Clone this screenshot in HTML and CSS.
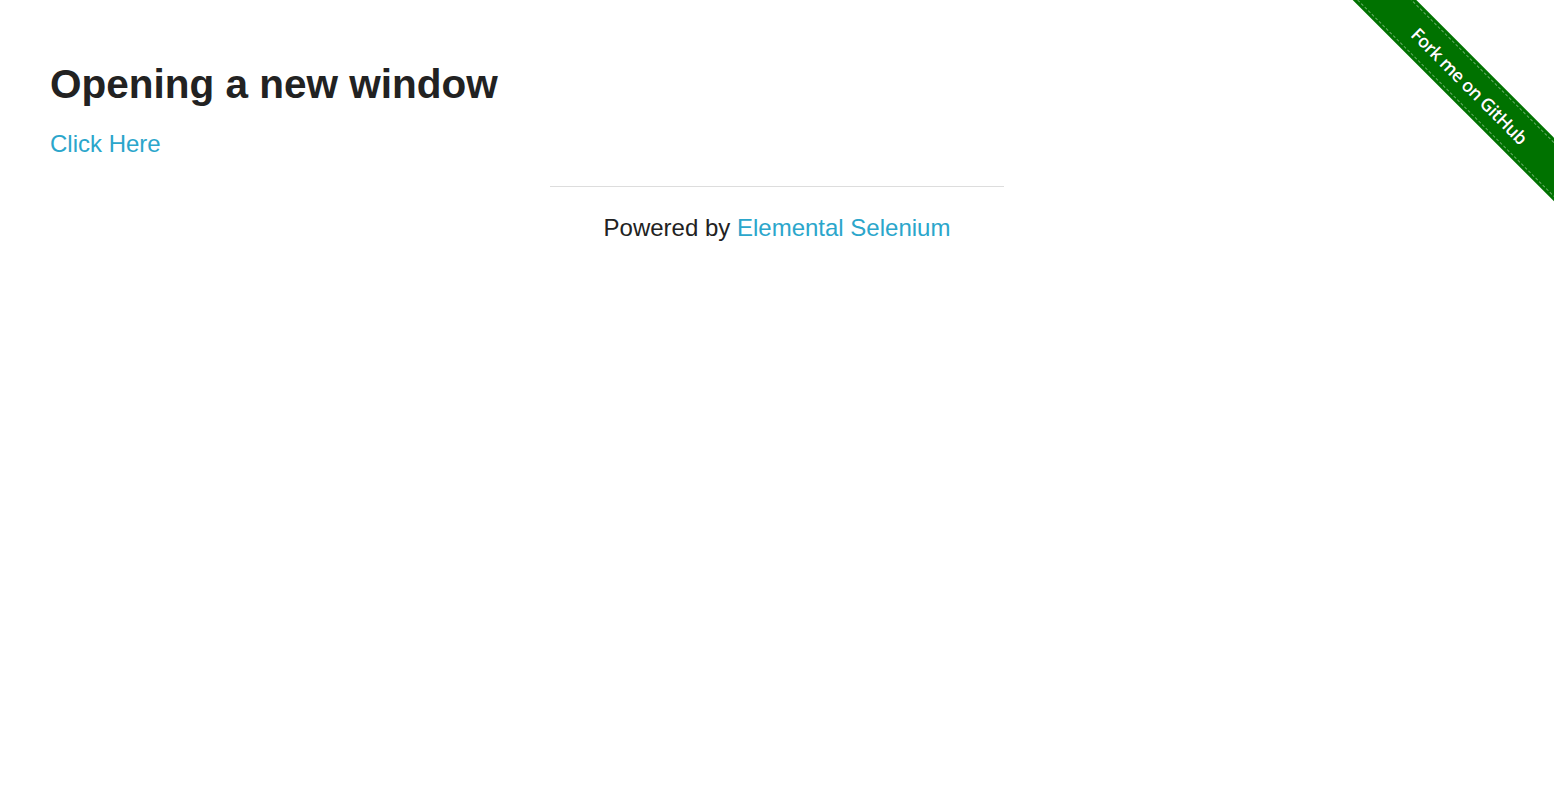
FILE: index.html
```html
<!DOCTYPE html>
<html>
<head>
<meta charset="utf-8">
<title>The Internet</title>
<link rel="stylesheet" href="styles.css">
</head>
<body>
<div class="ribbon-wrap">
  <a class="ribbon" href="#"><span class="ribbon-inner">Fork me on GitHub</span></a>
</div>
<div class="page">
  <div class="content">
    <div class="example">
      <h3 class="title">Opening a new window</h3>
      <a class="link" href="#">Click Here</a>
    </div>
  </div>
  <div class="footer">
    <hr class="rule">
    <div class="powered">Powered by <a class="link" href="#">Elemental Selenium</a></div>
  </div>
</div>
</body>
</html>
```
FILE: styles.css
```css
html, body {
  margin: 0;
  padding: 0;
  background: #fff;
}
body {
  font-family: "Liberation Sans", Arial, Helvetica, sans-serif;
  color: #222;
  font-size: 24px;
}
.page {
  padding: 0 50px;
}
.content {
  padding-top: 59px;
}
.title {
  margin: 0 0 21px 0;
  font-size: 40.5px;
  line-height: 50px;
  font-weight: bold;
  color: #222;
}
.link {
  color: #2ba6cb;
  text-decoration: none;
  font-size: 24px;
  line-height: 28px;
}
.example .link {
  display: inline-block;
}
.footer {
  display: flex;
  flex-direction: column;
  align-items: center;
}
.rule {
  width: 454px;
  margin: 28px 0 0 0;
  border: 0;
  border-top: 1px solid #ddd;
  height: 0;
}
.powered {
  margin-top: 27px;
  line-height: 28px;
  text-align: center;
}
.ribbon-wrap {
  position: absolute;
  top: 0;
  right: 0;
  width: 220px;
  height: 220px;
  overflow: hidden;
}
.ribbon {
  position: absolute;
  left: -14px;
  top: 63px;
  width: 300px;
  height: 45px;
  background: #007200;
  transform: rotate(45deg);
  transform-origin: 50% 50%;
  display: flex;
  align-items: center;
  justify-content: center;
  text-decoration: none;
  box-sizing: border-box;
  padding: 3px 0;
}
.ribbon-inner {
  display: flex;
  align-items: center;
  justify-content: center;
  width: 100%;
  height: 100%;
  box-sizing: border-box;
  border-top: 1px dashed rgba(255,255,255,0.4);
  border-bottom: 1px dashed rgba(255,255,255,0.4);
  color: #fff;
  font-family: "Open Sans", "DejaVu Sans", sans-serif;
  font-weight: 600;
  font-size: 18px;
  letter-spacing: -0.5px;
  text-shadow: 0 0 1px rgba(0,0,0,0.5);
}
```
